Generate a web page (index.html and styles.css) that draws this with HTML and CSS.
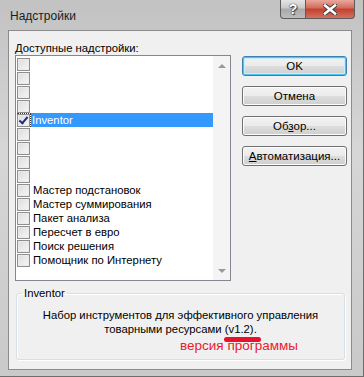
FILE: index.html
```html
<!DOCTYPE html>
<html>
<head>
	<meta charset="UTF-8">
	<title>Надстройки</title>
	<link rel="stylesheet" href="styles.css">
</head>
<body>
	<div class="window">
		<div class="titlebar">
			<span class="title">Надстройки</span>
			<div class="controls">
				<span class="ctl help">?</span>
				<span class="ctl close">
					<svg width="14" height="11" viewBox="0 0 14 11"><path d="M2 1.5 L12 9.5 M12 1.5 L2 9.5" stroke="#3a3a3a" stroke-width="4.4" stroke-linecap="square"/><path d="M2 1.5 L12 9.5 M12 1.5 L2 9.5" stroke="#fff" stroke-width="2.6" stroke-linecap="square"/></svg>
				</span>
			</div>
		</div>
		<div class="client">
			<div class="top">
				<div class="left">
					<div class="label"><u>Д</u>оступные надстройки:</div>
					<div class="listbox">
						<ul class="items">
							<li><i class="cb"></i></li>
							<li><i class="cb"></i></li>
							<li><i class="cb"></i></li>
							<li><i class="cb"></i></li>
							<li class="sel"><span class="focus"><i class="cb on"></i></span><span class="txt">Inventor</span></li>
							<li><i class="cb"></i></li>
							<li><i class="cb"></i></li>
							<li><i class="cb"></i></li>
							<li><i class="cb"></i></li>
							<li><i class="cb"></i><span class="txt">Мастер подстановок</span></li>
							<li><i class="cb"></i><span class="txt">Мастер суммирования</span></li>
							<li><i class="cb"></i><span class="txt">Пакет анализа</span></li>
							<li><i class="cb"></i><span class="txt">Пересчет в евро</span></li>
							<li><i class="cb"></i><span class="txt">Поиск решения</span></li>
							<li><i class="cb"></i><span class="txt">Помощник по Интернету</span></li>
						</ul>
						<div class="scroll">
							<span class="arr up"></span>
							<span class="arr down"></span>
						</div>
					</div>
				</div>
				<div class="buttons">
					<button class="btn default">OK</button>
					<button class="btn">Отмена</button>
					<button class="btn">Об<u>з</u>ор...</button>
					<button class="btn"><u>А</u>втоматизация...</button>
				</div>
			</div>
			<fieldset class="info">
				<legend>Inventor</legend>
				<p class="desc">Набор инструментов для эффективного управления<br>товарными ресурсами <span class="ver">(v1.2)</span>.</p>
				<p class="note">версия программы</p>
			</fieldset>
		</div>
	</div>
</body>
</html>
```

FILE: styles.css
```css
	body{
		margin:0;
		background:#fff;
		font-family:"Liberation Sans", Arial, sans-serif;
		font-size:11.3px;
		color:#000;
	}
	.window{
		width:364px;
		height:377px;
		box-sizing:border-box;
		padding:0 11px 6px 8px;
		display:flex;
		flex-direction:column;
		background:linear-gradient(to bottom,#c2c2c2,#d6d6d6 40%,#c9c9c9);
		border-right:1px solid #6e6e6e;
		border-bottom:1px solid #6e6e6e;
	}
	.titlebar{
		height:30px;
		display:flex;
		align-items:flex-start;
		justify-content:space-between;
		flex-shrink:0;
	}
	.title{
		margin:9px 0 0 2px;
		font-size:12px;
		color:#1b1b1b;
	}
	.controls{
		display:flex;
		margin-right:-3px;
	}
	.ctl{
		height:19px;
		box-sizing:border-box;
		display:flex;
		align-items:center;
		justify-content:center;
		border:1px solid #5c5c5c;
		border-top:none;
	}
	.help{
		width:26px;
		border-radius:0 0 0 4px;
		background:linear-gradient(to bottom,#e4e4e4,#c8c8c8 45%,#a9a9a9 50%,#bdbdbd);
		color:#fff;
		font-weight:bold;
		font-size:14px;
		text-shadow:0 0 1px #333,0 0 1px #333,1px 1px 1px #444;
	}
	.close{
		width:49px;
		border-left:none;
		border-radius:0 0 4px 0;
		background:linear-gradient(to bottom,#e8a89c,#d26a5a 45%,#c2412f 50%,#d5705f);
	}
	.client{
		flex:1;
		background:#f0f0f0;
		border:1px solid #8c8c8c;
		padding:0 0 0 6px;
		display:flex;
		flex-direction:column;
	}
	.top{
		display:flex;
		align-items:flex-start;
	}
	.left{
		width:216px;
	}
	.label{
		margin-top:10px;
		height:14px;
		line-height:14px;
	}
	.label u, .btn u{
		text-decoration-thickness:1px;
	}
	.listbox{
		height:224px;
		border:1px solid #828790;
		background:#fff;
		display:flex;
	}
	.items{
		list-style:none;
		margin:0;
		padding:1px 0 0 1px;
		flex:1;
	}
	.items li{
		height:14px;
		display:flex;
		align-items:center;
	}
	.cb{
		flex-shrink:0;
		width:11px;
		height:11px;
		border:1px solid #8f8f8f;
		background:linear-gradient(135deg,#dcdcdc,#f7f7f7);
		box-shadow:inset 0 0 0 1px #eaeaea;
		position:relative;
		margin-right:2px;
	}
	.cb.on:after{
		content:'';
		position:absolute;
		left:3px;
		top:0;
		width:3px;
		height:7px;
		border:solid #1f2f7a;
		border-width:0 2px 2px 0;
		transform:rotate(40deg);
	}
	.items .txt{
		line-height:13px;
		padding:0 2px 0 1px;
	}
	.focus{
		display:flex;
		align-items:center;
		height:14px;
		box-sizing:border-box;
		outline:1px dotted #333;
		outline-offset:-1px;
	}
	.items li.sel .cb{
		margin-right:1px;
	}
	.items li.sel .txt{
		width:179px;
		background:#3399ff;
		color:#fff;
		line-height:14px;
	}
	.scroll{
		width:17px;
		background:#f4f4f4;
		display:flex;
		flex-direction:column;
		justify-content:space-between;
		align-items:center;
		padding:8px 0 7px;
	}
	.arr{
		width:0;
		height:0;
		border-left:4px solid transparent;
		border-right:4px solid transparent;
	}
	.arr.up{
		border-bottom:4px solid #9a9a9a;
	}
	.arr.down{
		border-top:4px solid #9a9a9a;
	}
	.buttons{
		margin:25px 0 0 11px;
		display:flex;
		flex-direction:column;
		gap:10px;
	}
	.btn{
		width:105px;
		height:20px;
		padding:0;
		font-family:inherit;
		font-size:11.5px;
		color:#000;
		border:1px solid #707070;
		border-radius:3px;
		background:linear-gradient(to bottom,#f2f2f2,#ebebeb 50%,#dddddd 50%,#cfcfcf);
		box-shadow:inset 0 0 0 1px #fcfcfc;
	}
	.btn.default{
		border-color:#3c7fb1;
		box-shadow:inset 0 0 0 1px #4cc3f0,inset 0 0 0 2px #c7ecfb;
	}
	.info{
		margin:6px 6px 9px 1px;
		padding:0 4px 0;
		border:1px solid #d5dfe5;
		border-radius:3px;
		box-shadow:inset 1px 1px 0 #fff,1px 1px 0 #fff;
		flex:1;
		text-align:center;
	}
	.info legend{
		text-align:left;
		margin-left:1px;
		padding:0 2px;
		line-height:13px;
	}
	.desc{
		margin:8px 0 0;
		line-height:14px;
	}
	.ver{
		position:relative;
	}
	.ver:after{
		content:'';
		position:absolute;
		left:-1px;
		right:-7px;
		top:14px;
		height:5px;
		border-radius:3px;
		background:#e8102a;
	}
	.note{
		margin:2px 0 0 159px;
		text-align:left;
		font-size:13.5px;
		color:#e8202e;
	}
```
